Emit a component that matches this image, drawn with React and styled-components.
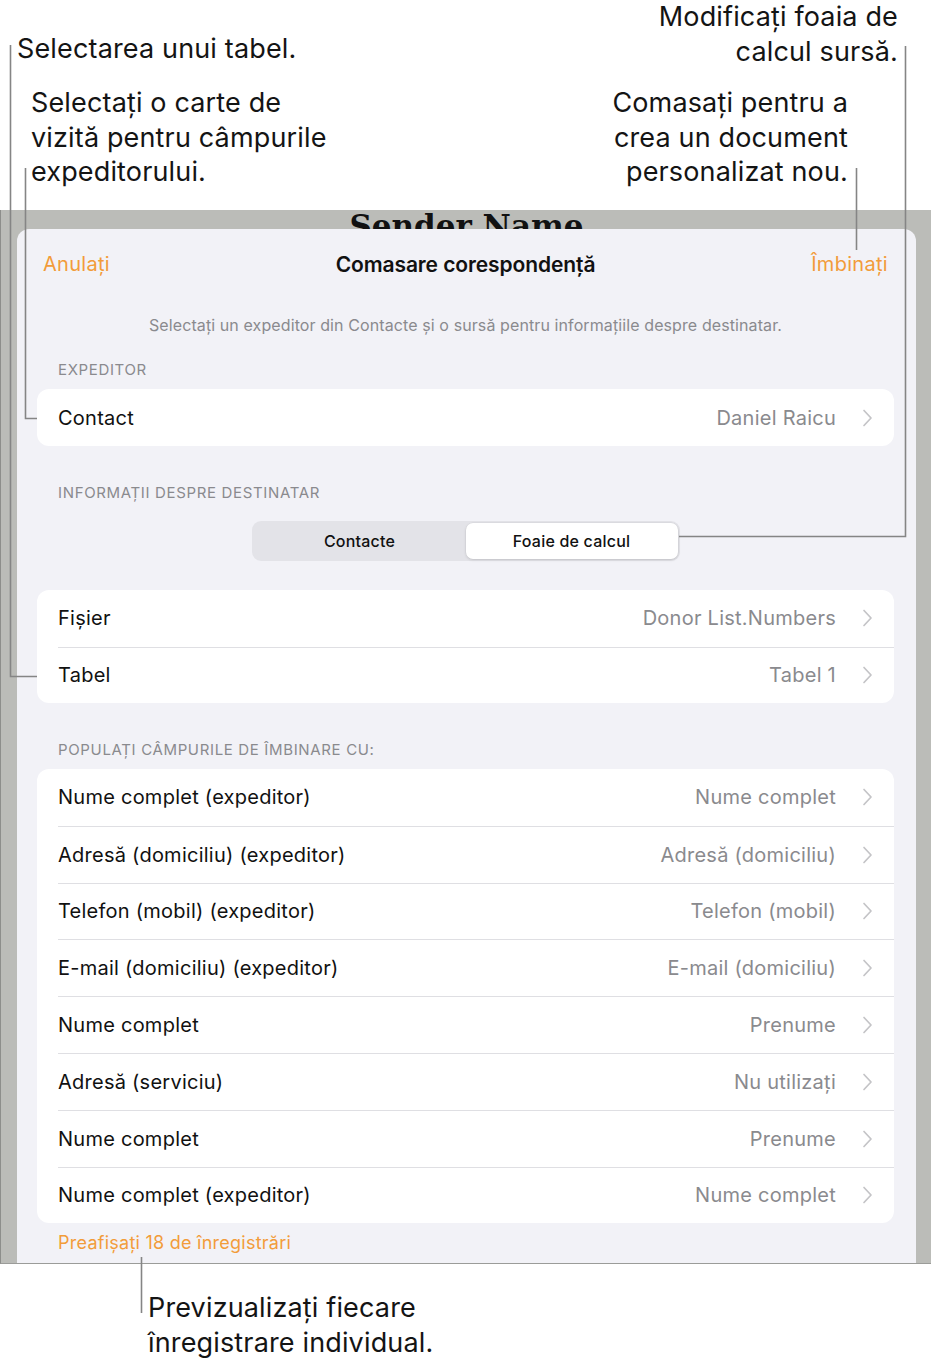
import React from "react";
import styled, { createGlobalStyle } from "styled-components";

const GlobalStyle = createGlobalStyle`
  body {
    margin: 0;
    background: #fff;
    font-family: Inter, "Noto Sans", "Liberation Sans", sans-serif;
    -webkit-font-smoothing: antialiased;
  }
`;

const ORANGE = "#f29c3a";
const GREY_TEXT = "#8a8a8e";

const Page = styled.div`
  position: relative;
  width: 931px;
  height: 1370px;
  overflow: hidden;
  background: #fff;
`;

const TopCallouts = styled.div`
  height: 210px;
  display: flex;
  flex-direction: column;
`;

const CalloutRow = styled.div`
  display: flex;
  justify-content: space-between;
  align-items: flex-end;
  margin-top: ${(p) => p.$top}px;
  padding: 0 ${(p) => p.$right}px 0 ${(p) => p.$left}px;
`;

const Callout = styled.div`
  font-size: 27px;
  line-height: 34.5px;
  letter-spacing: 0.15px;
  color: #141414;
  text-align: ${(p) => (p.$right ? "right" : "left")};
  white-space: nowrap;
  margin-bottom: ${(p) => p.$lift || 0}px;
`;

const Frame = styled.div`
  box-sizing: border-box;
  height: 1054px;
  background: #bbbcb8;
  border-left: 1px solid #8d8e8b;
  border-bottom: 1px solid #9b9c99;
  padding: 0 15px 0 16px;
  display: flex;
  flex-direction: column;
  overflow: hidden;
`;

const DocTitle = styled.div`
  height: 19px;
  text-align: center;
  font-family: "DejaVu Serif", "Liberation Serif", serif;
  font-weight: 700;
  font-size: 31px;
  line-height: 32px;
  color: #111;
  white-space: nowrap;
`;

const Sheet = styled.div`
  position: relative;
  z-index: 1;
  flex: 1;
  background: #f2f2f7;
  border-radius: 12px 12px 0 0;
  padding: 0 22px 0 20px;
`;

const NavBar = styled.div`
  height: 70px;
  display: grid;
  grid-template-columns: 1fr auto 1fr;
  align-items: center;
  padding: 0 6px;
  font-size: 20px;
  letter-spacing: 0.3px;
`;

const NavButton = styled.div`
  color: ${ORANGE};
  text-align: ${(p) => (p.$right ? "right" : "left")};
`;

const NavTitle = styled.div`
  font-size: 21px;
  font-weight: 600;
  color: #111;
  letter-spacing: -0.1px;
`;

const Description = styled.div`
  margin-top: 16px;
  text-align: center;
  font-size: 16px;
  line-height: 20px;
  letter-spacing: 0.1px;
  color: ${GREY_TEXT};
`;

const SectionHeader = styled.div`
  margin-top: ${(p) => p.$top}px;
  padding-left: 21px;
  font-size: 15px;
  line-height: 20px;
  color: ${GREY_TEXT};
  text-transform: uppercase;
  letter-spacing: 0.65px;
`;

const Card = styled.div`
  margin-top: ${(p) => p.$top}px;
  background: #fff;
  border-radius: 12px;
  overflow: hidden;
`;

const Row = styled.div`
  padding-left: 21px;
`;

const RowInner = styled.div`
  box-sizing: border-box;
  height: ${(p) => p.$h}px;
  display: flex;
  align-items: center;
  padding-right: 21px;
  border-top: ${(p) => (p.$first ? "none" : "1px solid #dfdfe3")};
  font-size: 20px;
  letter-spacing: 0.25px;
`;

const RowLabel = styled.div`
  flex: 1;
  color: #111;
`;

const RowValue = styled.div`
  color: ${GREY_TEXT};
  margin-right: 26px;
`;

const Segmented = styled.div`
  margin: 18px auto 0;
  width: 428px;
  height: 40px;
  box-sizing: border-box;
  padding: 2px;
  background: #e3e3e8;
  border-radius: 9px;
  display: grid;
  grid-template-columns: 1fr 1fr;
`;

const Segment = styled.div`
  display: flex;
  align-items: center;
  justify-content: center;
  font-size: 16px;
  font-weight: 500;
  letter-spacing: 0.2px;
  color: #111;
  border-radius: 7px;
  background: ${(p) => (p.$active ? "#fff" : "transparent")};
  box-shadow: ${(p) =>
    p.$active ? "0 1px 3px rgba(0,0,0,0.13), 0 0 0 0.5px rgba(0,0,0,0.04)" : "none"};
`;

const FooterLink = styled.div`
  margin-top: 9px;
  padding-left: 21px;
  font-size: 18px;
  line-height: 22px;
  letter-spacing: 0.25px;
  color: ${ORANGE};
`;

const BottomCallout = styled.div`
  margin-top: 27px;
  padding-left: 148px;
`;

const Leaders = styled.svg`
  position: absolute;
  top: 0;
  left: 0;
  z-index: 5;
  pointer-events: none;
`;

const Chevron = () => (
  <svg width="11" height="20" viewBox="0 0 11 20">
    <path
      d="M2 2.5 L9 10 L2 17.5"
      fill="none"
      stroke="#c4c4c7"
      strokeWidth="1.7"
      strokeLinecap="round"
      strokeLinejoin="round"
    />
  </svg>
);

const ListCard = ({ rows, top, h }) => (
  <Card $top={top}>
    {rows.map(([label, value], i) => (
      <Row key={i}>
        <RowInner $first={i === 0} $h={h}>
          <RowLabel>{label}</RowLabel>
          <RowValue>{value}</RowValue>
          <Chevron />
        </RowInner>
      </Row>
    ))}
  </Card>
);

const mergeFields = [
  ["Nume complet (expeditor)", "Nume complet"],
  ["Adresă (domiciliu) (expeditor)", "Adresă (domiciliu)"],
  ["Telefon (mobil) (expeditor)", "Telefon (mobil)"],
  ["E-mail (domiciliu) (expeditor)", "E-mail (domiciliu)"],
  ["Nume complet", "Prenume"],
  ["Adresă (serviciu)", "Nu utilizați"],
  ["Nume complet", "Prenume"],
  ["Nume complet (expeditor)", "Nume complet"],
];

export default function App() {
  return (
    <Page>
      <GlobalStyle />
      <TopCallouts>
        <CalloutRow $top={0} $left={17} $right={33}>
          <Callout $lift={3}>Selectarea unui tabel.</Callout>
          <Callout $right>
            Modificați foaia de
            <br />
            calcul sursă.
          </Callout>
        </CalloutRow>
        <CalloutRow $top={17} $left={31} $right={83}>
          <Callout>
            Selectați o carte de
            <br />
            vizită pentru câmpurile
            <br />
            expeditorului.
          </Callout>
          <Callout $right>
            Comasați pentru a
            <br />
            crea un document
            <br />
            personalizat nou.
          </Callout>
        </CalloutRow>
      </TopCallouts>

      <Frame>
        <DocTitle>Sender Name</DocTitle>
        <Sheet>
          <NavBar>
            <NavButton>Anulați</NavButton>
            <NavTitle>Comasare corespondență</NavTitle>
            <NavButton $right>Îmbinați</NavButton>
          </NavBar>
          <Description>
            Selectați un expeditor din Contacte și o sursă pentru informațiile despre destinatar.
          </Description>

          <SectionHeader $top={25}>Expeditor</SectionHeader>
          <ListCard top={9} h={57} rows={[["Contact", "Daniel Raicu"]]} />

          <SectionHeader $top={37}>Informații despre destinatar</SectionHeader>
          <Segmented>
            <Segment>Contacte</Segment>
            <Segment $active>Foaie de calcul</Segment>
          </Segmented>

          <ListCard
            top={29}
            h={56.5}
            rows={[
              ["Fișier", "Donor List.Numbers"],
              ["Tabel", "Tabel 1"],
            ]}
          />

          <SectionHeader $top={37}>Populați câmpurile de îmbinare cu:</SectionHeader>
          <ListCard top={9} h={56.8} rows={mergeFields} />

          <FooterLink>Preafișați 18 de înregistrări</FooterLink>
        </Sheet>
      </Frame>

      <BottomCallout>
        <Callout>
          Previzualizați fiecare
          <br />
          înregistrare individual.
        </Callout>
      </BottomCallout>

      <Leaders width="931" height="1370" viewBox="0 0 931 1370">
        <g fill="none" stroke="#858585" strokeWidth="1.6">
          <path d="M10.5 45 V676.5 H37" />
          <path d="M25.5 168 V418.5 H37" />
          <path d="M905.5 46 V536.5 H679" />
          <path d="M856.5 168 V250" />
          <path d="M141.5 1257 V1313" />
        </g>
      </Leaders>
    </Page>
  );
}
